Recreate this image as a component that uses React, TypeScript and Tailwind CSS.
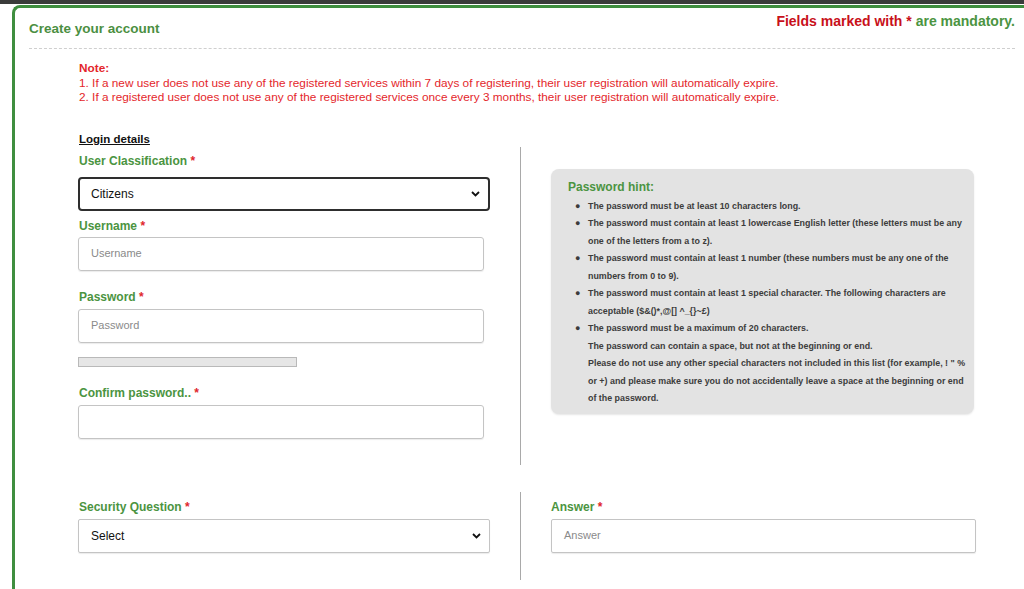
import React from "react";

const font = { fontFamily: '"Liberation Sans", Arial, sans-serif' };

const Label = ({ text, className = "" }: { text: string; className?: string }) => (
  <div className={`text-[12px] leading-[16px] font-bold text-[#4b9441] ${className}`}>
    {text} <span className="text-[#e0262c]">*</span>
  </div>
);

const Chevron = () => (
  <svg
    className="absolute right-[8px] top-1/2 -translate-y-1/2"
    width="9"
    height="6"
    viewBox="0 0 9 6"
    fill="none"
  >
    <path d="M1 1l3.5 3.5L8 1" stroke="#111" strokeWidth="1.8" />
  </svg>
);

const hints = [
  ["The password must be at least 10 characters long."],
  [
    "The password must contain at least 1 lowercase English letter (these letters must be any one of the letters from a to z).",
  ],
  [
    "The password must contain at least 1 number (these numbers must be any one of the numbers from 0 to 9).",
  ],
  [
    "The password must contain at least 1 special character. The following characters are acceptable ($&()*,@[] ^_{}~£)",
  ],
  [
    "The password must be a maximum of 20 characters.",
    "The password can contain a space, but not at the beginning or end.",
    'Please do not use any other special characters not included in this list (for example, ! " % or +) and please make sure you do not accidentally leave a space at the beginning or end of the password.',
  ],
];

export default function App() {
  return (
    <div className="w-[1024px] h-[589px] overflow-hidden bg-white" style={font}>
      <div className="h-[4px] bg-[#3a3b3a]" />
      <div className="ml-[12px] mt-[1px] h-[600px] border-l-[3px] border-t-[3px] border-[#3f8e3f] rounded-tl-[8px] pl-[14px] pr-[9px]">
        {/* Header */}
        <div className="flex justify-between items-start h-[41px] border-b border-dashed border-[#cfcfcf]">
          <div className="mt-[13px] text-[13.5px] leading-[16px] font-bold text-[#4b8f42]">
            Create your account
          </div>
          <div className="mt-[5px] text-[14px] leading-[16px] font-bold">
            <span className="text-[#c8101a]">Fields marked with * </span>
            <span className="text-[#4b9441]">are mandatory.</span>
          </div>
        </div>

        {/* Note */}
        <div className="ml-[50px] mt-[12px] text-[11.8px] leading-[14.5px] text-[#e4262b]">
          <div className="font-bold">Note:</div>
          <div>
            1. If a new user does not use any of the registered services within 7 days of registering, their user
            registration will automatically expire.
          </div>
          <div>
            2. If a registered user does not use any of the registered services once every 3 months, their user
            registration will automatically expire.
          </div>
        </div>

        {/* Login details */}
        <div className="ml-[49px] mt-[26px] flex">
          <div className="w-[412px]">
            <div className="ml-[1px] text-[11.5px] leading-[16px] font-bold text-[#111] underline">Login details</div>
            <Label text="User Classification" className="mt-[6px] ml-[1px]" />
            <div className="relative mt-[8px] h-[34px] border-2 border-[#2e2e2e] rounded-[4px] flex items-center pl-[11px] text-[12px] text-[#111]">
              Citizens
              <Chevron />
            </div>
            <Label text="Username" className="mt-[7px] ml-[1px]" />
            <div className="mt-[3px] w-[406px] h-[34px] border-[1.5px] border-[#c4c4c4] rounded-[3px] flex items-center pl-[12px] text-[11px] text-[#8a8a8a] shadow-[0_1px_1px_rgba(0,0,0,0.08)]">
              Username
            </div>
            <Label text="Password" className="mt-[18px] ml-[1px]" />
            <div className="mt-[4px] w-[406px] h-[34px] border-[1.5px] border-[#c4c4c4] rounded-[3px] flex items-center pl-[12px] text-[11px] text-[#8a8a8a] shadow-[0_1px_1px_rgba(0,0,0,0.08)]">
              Password
            </div>
            <div className="mt-[14px] w-[219px] h-[10px] bg-[#e6e6e6] border border-[#b9b9b9]" />
            <Label text="Confirm password.." className="mt-[18px] ml-[1px]" />
            <div className="mt-[4px] w-[406px] h-[34px] border-[1.5px] border-[#c4c4c4] rounded-[3px] shadow-[0_1px_1px_rgba(0,0,0,0.08)]" />
          </div>

          <div className="ml-[30px] mt-[16px] w-px h-[318px] bg-[#a9a9a9]" />

          <div className="ml-[30px] mt-[38px]">
            <div className="w-[423px] bg-[#e3e3e3] rounded-[8px] pl-[17px] pr-[4px] pt-[10px] pb-[6px] shadow-[0_1px_2px_rgba(0,0,0,0.1)]">
              <div className="text-[12px] leading-[16px] font-bold text-[#4b9441]">Password hint:</div>
              <ul className="mt-[3px] text-[8.9px] leading-[17.5px] font-bold text-[#3c3c3c]">
                {hints.map((group, i) => (
                  <li key={i} className="flex">
                    <span className="w-[20px] shrink-0 pl-[7px] text-[9px]">●</span>
                    <div>
                      {group.map((line, j) => (
                        <div key={j}>{line}</div>
                      ))}
                    </div>
                  </li>
                ))}
              </ul>
            </div>
          </div>
        </div>

        {/* Security question */}
        <div className="ml-[49px] mt-[27px] flex">
          <div className="w-[412px] pt-[7px]">
            <Label text="Security Question" className="ml-[1px]" />
            <div className="relative mt-[4px] h-[34px] border-[1.5px] border-[#c4c4c4] rounded-[2px] flex items-center pl-[12px] text-[12px] text-[#111] shadow-[0_1px_1px_rgba(0,0,0,0.08)]">
              Select
              <Chevron />
            </div>
          </div>

          <div className="ml-[30px] w-px h-[88px] bg-[#a9a9a9]" />

          <div className="ml-[30px] pt-[7px]">
            <Label text="Answer" />
            <div className="mt-[4px] w-[425px] h-[34px] border-[1.5px] border-[#c4c4c4] rounded-[2px] flex items-center pl-[12px] text-[11px] text-[#8a8a8a] shadow-[0_1px_1px_rgba(0,0,0,0.08)]">
              Answer
            </div>
          </div>
        </div>
      </div>
    </div>
  );
}
